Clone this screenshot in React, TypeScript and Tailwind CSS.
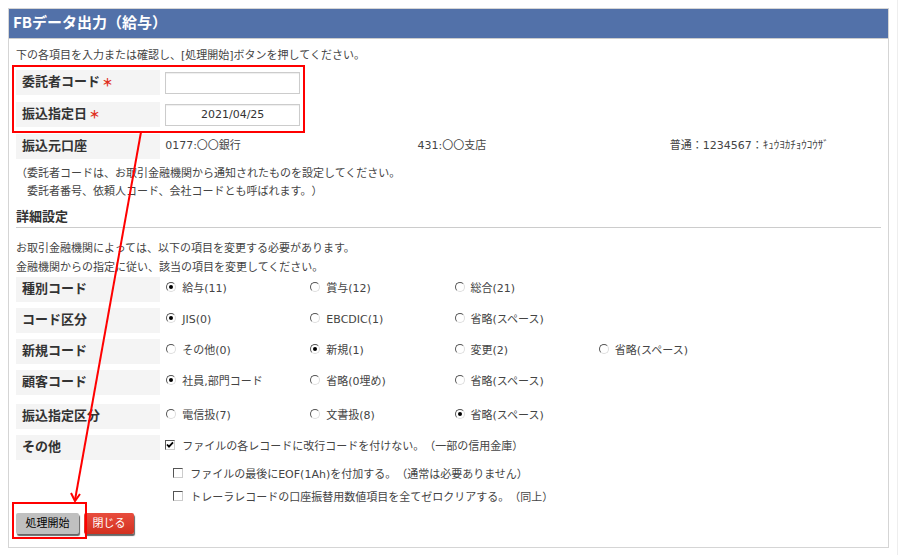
import type { ReactNode } from "react";

const CODE_GROUPS: { name: string; label: string; selected: number; options: string[]; spaced?: boolean }[] = [
  { name: "type", label: "種別コード", selected: 0, options: ["給与(11)", "賞与(12)", "総合(21)"] },
  { name: "encoding", label: "コード区分", selected: 0, options: ["JIS(0)", "EBCDIC(1)", "省略(スペース)"] },
  { name: "new", label: "新規コード", selected: 1, options: ["その他(0)", "新規(1)", "変更(2)", "省略(スペース)"] },
  { name: "customer", label: "顧客コード", selected: 0, options: ["社員,部門コード", "省略(0埋め)", "省略(スペース)"] },
  { name: "transfer", label: "振込指定区分", selected: 2, options: ["電信扱(7)", "文書扱(8)", "省略(スペース)"], spaced: true },
];

const LABEL_CLASS = "flex h-[25px] items-center bg-[#f4f4f4] pb-[2px] pl-[6px] text-[13px] font-bold text-[#333]";
const INPUT_CLASS =
  "h-[22px] w-[135px] border border-[#ccc] bg-white text-center text-[11px] text-[#333] shadow-[inset_0_1px_1px_#eee] outline-none";

function Required() {
  return <span className="ml-[2px] font-['Noto_Sans_CJK_JP',sans-serif] text-[11px] font-black text-[#e0301e]">＊</span>;
}

function Radio({ name, label, checked }: { name: string; label: string; checked: boolean }) {
  return (
    <label className="flex items-center pb-[2px] pl-[6px]">
      <input
        type="radio"
        name={name}
        defaultChecked={checked}
        className="mb-[4px] grid size-[10px] shrink-0 appearance-none place-items-center rounded-full border border-[#555] border-r-[#ddd] border-b-[#ddd] bg-white before:size-[4px] before:rounded-full checked:before:bg-black"
      />
      <span className="ml-[6px] whitespace-nowrap">{label}</span>
    </label>
  );
}

function Checkbox({ children, checked }: { children: ReactNode; checked?: boolean }) {
  return (
    <label className="flex items-center">
      <span className="relative mb-[4px] flex shrink-0">
        <input
          type="checkbox"
          defaultChecked={checked}
          className="peer size-[10px] appearance-none border border-[#555] border-r-[#ccc] border-b-[#ccc] bg-white"
        />
        <svg
          viewBox="0 0 10 10"
          className="pointer-events-none absolute inset-0 hidden size-[10px] peer-checked:block"
          aria-hidden
        >
          <path d="M2 4.5 4 6.7 8 2.4" fill="none" stroke="#000" strokeWidth="1.8" />
        </svg>
      </span>
      <span className="ml-[7px]">{children}</span>
    </label>
  );
}

// Red guide marks laid over the form: the fields to fill in, then the button to press
function GuideOverlay() {
  return (
    <svg className="pointer-events-none absolute top-0 left-0 h-[555px] w-[898px]" aria-hidden>
      <g fill="none" stroke="#ff0000" strokeWidth="2">
        <rect x="13" y="66" width="291" height="66" />
        <rect x="13" y="503" width="73" height="35" />
        <path d="M141 132 75 500" />
        <path d="M71 493 75 501 80 494" />
      </g>
    </svg>
  );
}

export default function App() {
  return (
    <main className="relative min-h-screen border-r border-[#eee] bg-white p-2 font-['DejaVu_Sans','Noto_Sans_CJK_JP',sans-serif] text-[11px] leading-[18px] text-[#444] [text-spacing-trim:space-all]">
      <form className="border border-[#d5d5d5]" onSubmit={(e) => e.preventDefault()}>
        <h1 className="flex h-[30px] items-center border-b border-[#ccc] bg-[#5271a9] pb-1 pl-1 font-['Noto_Sans_CJK_JP',sans-serif] text-[15px] font-bold text-white">
          FBデータ出力（給与）
        </h1>

        <div className="px-[7px] pt-[8px] pb-[13px]">
          <p>下の各項目を入力または確認し、[処理開始]ボタンを押してください。</p>

          <div className="mt-[5px] grid grid-cols-[1fr_5fr] gap-y-[7px]">
            <label htmlFor="consignor" className={LABEL_CLASS}>
              委託者コード
              <Required />
            </label>
            <div className="flex items-center pl-[5px]">
              <input id="consignor" type="text" className={INPUT_CLASS} />
            </div>

            <label htmlFor="date" className={LABEL_CLASS}>
              振込指定日
              <Required />
            </label>
            <div className="flex items-center pl-[5px]">
              <input id="date" type="text" defaultValue="2021/04/25" className={INPUT_CLASS} />
            </div>

            <div className={LABEL_CLASS}>振込元口座</div>
            <div className="grid grid-cols-[7fr_7fr_6fr] items-center pb-[2px] whitespace-nowrap">
              <span className="pl-[5px]">0177:〇〇銀行</span>
              <span className="pl-[5px]">431:〇〇支店</span>
              <span className="pl-[5px]">普通：1234567：ｷｭｳﾖｶﾁｮｳｺｳｻﾞ</span>
            </div>
          </div>

          <p className="mt-[6px]">
            （委託者コードは、お取引金融機関から通知されたものを設定してください。
            <br />
            {"\u3000委託者番号、依頼人コード、会社コードとも呼ばれます。）"}
          </p>

          <h2 className="mt-[6px] border-b border-[#ccc] text-[13px] leading-[20px] font-bold text-[#333]">詳細設定</h2>

          <p className="mt-[11px] leading-[19px]">
            お取引金融機関によっては、以下の項目を変更する必要があります。
            <br />
            金融機関からの指定に従い、該当の項目を変更してください。
          </p>

          <div className="flex flex-col gap-[6px]">
            {CODE_GROUPS.map(({ name, label, selected, options, spaced }) => (
              <div
                key={name}
                role="radiogroup"
                aria-label={label}
                className={spaced ? "mt-[3px] grid grid-cols-6" : "grid grid-cols-6"}
              >
                <div className={LABEL_CLASS}>{label}</div>
                {options.map((option, i) => (
                  <Radio key={option} name={name} label={option} checked={i === selected} />
                ))}
              </div>
            ))}

            <div className="grid grid-cols-[1fr_5fr]">
              <div className={LABEL_CLASS}>その他</div>
              <div className="flex items-center pb-[2px] pl-[5px]">
                <Checkbox checked>ファイルの各レコードに改行コードを付けない。（一部の信用金庫）</Checkbox>
              </div>
              <div className="col-start-2 mt-[3px] flex flex-col pl-[13px] leading-[23px]">
                <Checkbox>ファイルの最後にEOF(1Ah)を付加する。（通常は必要ありません）</Checkbox>
                <Checkbox>トレーラレコードの口座振替用数値項目を全てゼロクリアする。（同上）</Checkbox>
              </div>
            </div>
          </div>

          <div className="mt-1 flex gap-[5px]">
            <button
              type="submit"
              className="h-[21px] w-[63px] rounded-[2px] bg-[#c0c0c0] text-black shadow-[1px_2px_1px_#666]"
            >
              処理開始
            </button>
            <button
              type="button"
              className="h-[21px] w-[50px] rounded-[2px] bg-linear-to-b from-[#e84c3d] to-[#d3301f] text-white shadow-[1px_2px_1px_#666]"
            >
              閉じる
            </button>
          </div>
        </div>
      </form>

      <GuideOverlay />
    </main>
  );
}
